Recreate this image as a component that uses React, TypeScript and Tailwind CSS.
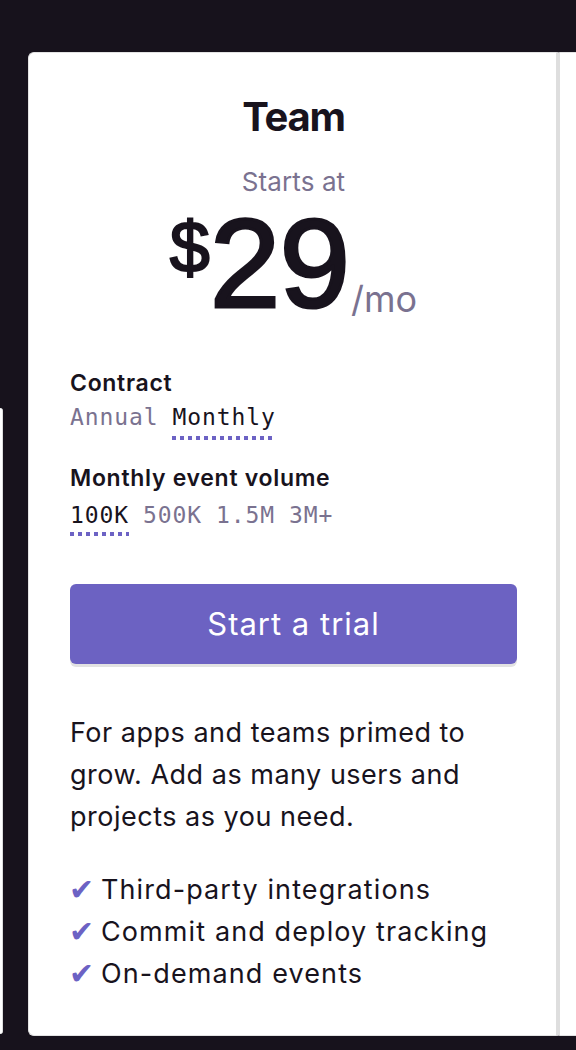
import { useState } from "react";

const sans = "font-['Inter','Noto_Sans',sans-serif]";
const mono = "font-['DejaVu_Sans_Mono','Liberation_Mono',monospace]";
const dots = "bg-[linear-gradient(to_right,#6c62c4_4px,transparent_4px)] bg-[length:8px_4px] bg-repeat-x bg-[position:left_bottom]";

type OptionProps = {
    label: string
    active: boolean
    pad: string
    onClick: () => void
}

const Option = ({ label, active, pad, onClick }: OptionProps) => (
    <button
        onClick={onClick}
        className={`leading-[23px] ${pad} ${active ? `text-[#18131d] ${dots}` : "text-[#7a7290]"}`}
    >
        {label}
    </button>
);

const features = ["Third-party integrations", "Commit and deploy tracking", "On-demand events"];

export default function App() {
    const [contract, setContract] = useState("Monthly");
    const [volume, setVolume] = useState("100K");

    return (
        <div className="w-[576px] h-[1050px] bg-[#17121c] overflow-hidden pt-[52px]">
            <div className="flex h-[984px]">
                {/* previous card peeking in */}
                <div className="w-[3px] mt-[356px] mb-[2px] bg-white border-r border-[#dcdcdc] rounded-r-[6px] shrink-0" />

                <div className={`ml-[25px] w-[532px] shrink-0 bg-white border border-[#e3e3e3] border-r-[4px] border-r-[#dedede] rounded-l-[6px] pt-[40px] pl-[41px] pr-[39px] ${sans}`}>
                    <h2 className="text-center text-[40px] font-bold text-[#18131d] tracking-[-1.2px] leading-[48px]">Team</h2>
                    <p className="text-center mt-[25px] text-[26px] leading-[32px] tracking-[0.1px] text-[#7a7290]">Starts at</p>

                    <div className="flex justify-center items-start mt-[2px] h-[127px]">
                        <span className="font-['Liberation_Sans',Arial,sans-serif] text-[72px] leading-none text-[#18131d] mt-[11px] [-webkit-text-stroke:2px_#18131d]">$</span>
                        <span className="font-['Liberation_Sans',Arial,sans-serif] text-[127px] leading-none text-[#18131d] tracking-[-1px] [-webkit-text-stroke:3px_#18131d]">29</span>
                        <span className="self-end text-[36px] leading-none text-[#7a7290] mb-[10px] ml-[2px]">/mo</span>
                    </div>

                    <h3 className="mt-[42px] text-[23px] font-semibold leading-[28px] tracking-[0.7px] text-[#18131d]">Contract</h3>
                    <div className={`flex gap-[14px] mt-[9px] text-[23px] tracking-[0.9px] ${mono}`}>
                        {["Annual", "Monthly"].map((c) => (
                            <Option key={c} label={c} pad="pb-[11px]" active={contract === c} onClick={() => setContract(c)} />
                        ))}
                    </div>

                    <h3 className="mt-[24px] text-[23px] font-semibold leading-[28px] tracking-[0.7px] text-[#18131d]">Monthly event volume</h3>
                    <div className={`flex gap-[14px] mt-[12px] text-[23px] tracking-[0.9px] ${mono}`}>
                        {["100K", "500K", "1.5M", "3M+"].map((v) => (
                            <Option key={v} label={v} pad="pb-[9px]" active={volume === v} onClick={() => setVolume(v)} />
                        ))}
                    </div>

                    <button className="mt-[48px] w-full h-[80px] rounded-[6px] bg-[#6c62c2] text-white text-[31px] tracking-[1px] shadow-[0_3px_0_#e2e2e2]">
                        Start a trial
                    </button>

                    <p className="mt-[48px] text-[27px] leading-[42px] tracking-[0.5px] text-[#18131d]">
                        For apps and teams primed to grow. Add as many users and projects as you need.
                    </p>

                    <ul className="mt-[31px]">
                        {features.map((f) => (
                            <li key={f} className="flex items-center text-[27px] leading-[42px] tracking-[1.1px] text-[#18131d]">
                                <span className="text-[#6c62c4] font-['DejaVu_Sans',sans-serif] text-[30px] leading-none w-[32px] -ml-[1px]">✔</span>
                                {f}
                            </li>
                        ))}
                    </ul>
                </div>

                {/* next card */}
                <div className="flex-1 bg-white border-t border-b border-[#e3e3e3]" />
            </div>
        </div>
    );
}
